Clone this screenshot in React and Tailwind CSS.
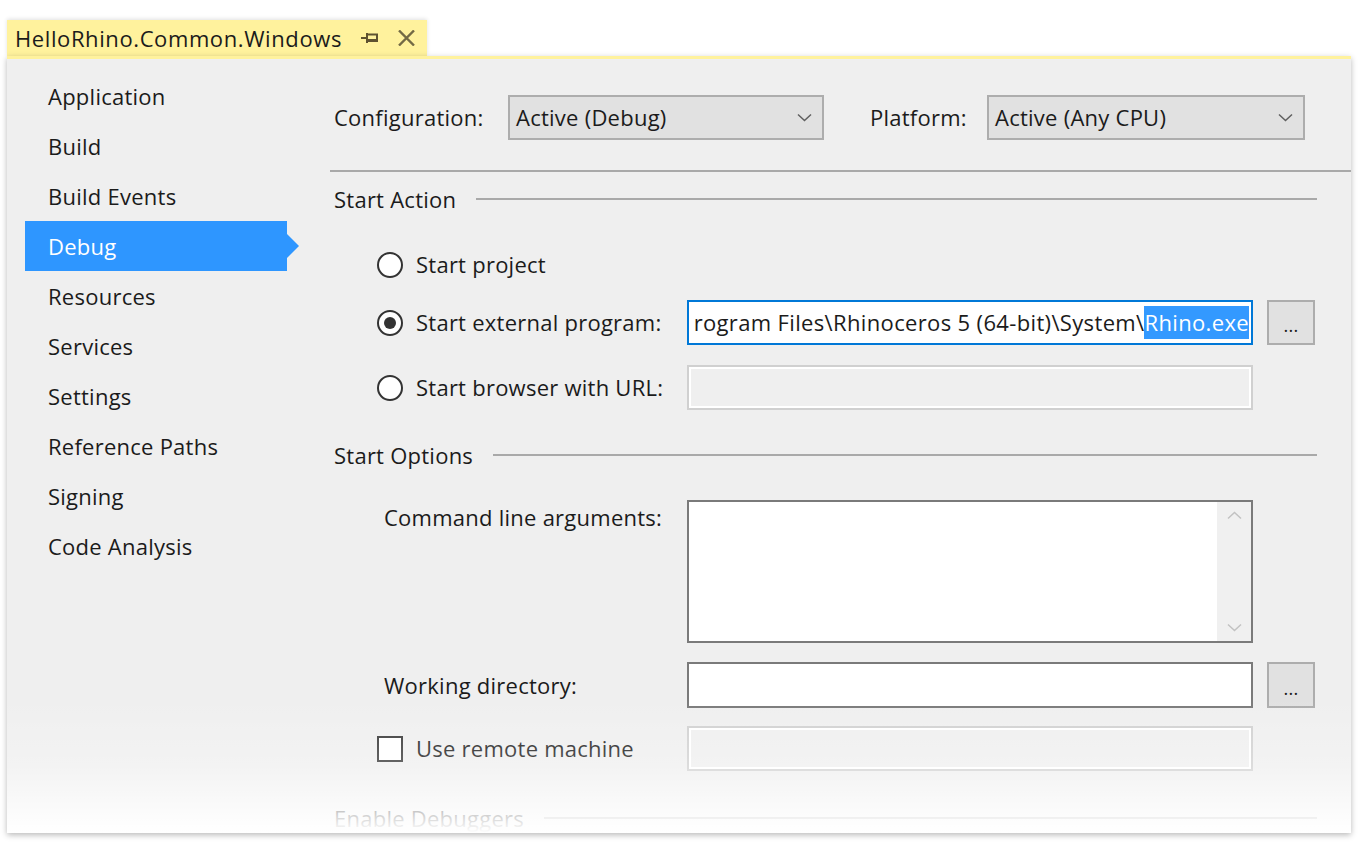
const font = { fontFamily: '"Open Sans", "Noto Sans", sans-serif' }

const navItems = [
  'Application',
  'Build',
  'Build Events',
  'Debug',
  'Resources',
  'Services',
  'Settings',
  'Reference Paths',
  'Signing',
  'Code Analysis',
]

function Chevron({ className = '' }) {
  return (
    <svg className={className} width="15" height="9" viewBox="0 0 15 9" fill="none" stroke="currentColor" strokeWidth="1.5">
      <path d="M1 1.5l6.5 6 6.5-6" />
    </svg>
  )
}

function Dropdown({ value, width }) {
  return (
    <div className={`${width} h-[45px] flex items-center justify-between bg-[#e1e1e1] border-2 border-[#adadad] pl-[6px] pr-[10px]`}>
      <span>{value}</span>
      <Chevron className="text-[#5f5f5f]" />
    </div>
  )
}

function SectionHeader({ title }) {
  return (
    <div className="h-[30px] flex items-center pl-[4px]">
      <span>{title}</span>
      <div className="flex-1 h-[2px] bg-[#a9a9a9] ml-[20px]" />
    </div>
  )
}

function Radio({ checked }) {
  return (
    <div className="w-[26px] h-[26px] rounded-full border-2 border-[#333] bg-white flex items-center justify-center shrink-0">
      {checked && <div className="w-[12px] h-[12px] rounded-full bg-[#333]" />}
    </div>
  )
}

function BrowseButton() {
  return (
    <div className="w-[48px] h-full ml-[14px] bg-[#e1e1e1] border-2 border-[#adadad] flex items-center justify-center pt-[6px] text-[18px]">
      ...
    </div>
  )
}

function DisabledField() {
  return <div className="w-[566px] h-full border-2 border-[#d0d0d0] bg-[#efefef] shadow-[inset_0_0_0_2px_#ffffff]" />
}

export default function App() {
  return (
    <div className="w-[1358px] h-[850px] bg-white overflow-hidden pt-[20px] pl-[7px] text-[22px] tracking-[0.25px] text-[#1b1b1b]" style={font}>
      <div className="w-[420px] h-[36px] bg-[#fff29d] flex items-center pl-[8px] shadow-[0_-1px_4px_rgba(0,0,0,0.12)]">
        <span className="w-[346px] tracking-[0.6px] whitespace-nowrap">HelloRhino.Common.Windows</span>
        <svg className="text-[#5e5230]" width="18" height="10" viewBox="0 0 18 10" fill="none" stroke="currentColor" strokeWidth="2">
          <path d="M0 5h6M6 0v10" />
          <path d="M6 1.5h10v6H6" />
          <path d="M6 7.5h11" strokeWidth="3" />
        </svg>
        <svg className="ml-[19px] text-[#736a45]" width="17" height="16" viewBox="0 0 17 16" fill="none" stroke="currentColor" strokeWidth="2.4">
          <path d="M1 0.5l15 15M16 0.5L1 15.5" />
        </svg>
      </div>
      <div className="relative w-[1344px] h-[777px] border-t-[3px] border-[#fff29d] bg-[#efefef] shadow-[0_2px_6px_rgba(0,0,0,0.28)] flex">
        <nav className="w-[323px] pt-[12px] pl-[18px] shrink-0">
          {navItems.map((item) =>
            item === 'Debug' ? (
              <div key={item} className="relative w-[262px] h-[50px] bg-[#2e96ff] text-white flex items-center pl-[23px]">
                {item}
                <div className="absolute right-[-12px] top-[13px] w-0 h-0 border-y-[12px] border-y-transparent border-l-[12px] border-l-[#2e96ff]" />
              </div>
            ) : (
              <div key={item} className="h-[50px] flex items-center pl-[23px]">
                {item}
              </div>
            )
          )}
        </nav>
        <main className="flex-1 pt-[36px]">
          <div className="flex items-center h-[45px] pl-[4px]">
            <span className="w-[174px]">Configuration:</span>
            <Dropdown value="Active (Debug)" width="w-[316px]" />
            <span className="w-[117px] ml-[46px]">Platform:</span>
            <Dropdown value="Active (Any CPU)" width="w-[318px]" />
          </div>
          <div className="mt-[30px] h-[2px] bg-[#a9a9a9]" />
          <div className="pr-[34px]">
            <div className="mt-[12px]">
              <SectionHeader title="Start Action" />
            </div>
            <div className="mt-[28px] h-[45px] flex items-center pl-[47px]">
              <Radio />
              <span className="ml-[13px]">Start project</span>
            </div>
            <div className="mt-[13px] h-[45px] flex items-center pl-[47px]">
              <Radio checked />
              <span className="ml-[13px] w-[271px]">Start external program:</span>
              <div className="w-[566px] h-full border-2 border-[#0078d7] bg-white flex items-center justify-end overflow-hidden whitespace-nowrap pr-[2px] tracking-[0.35px]">
                <span>rogram Files\Rhinoceros 5 (64-bit)\System\</span>
                <span className="bg-[#3399ff] text-white">Rhino.exe</span>
              </div>
              <BrowseButton />
            </div>
            <div className="mt-[20px] h-[45px] flex items-center pl-[47px]">
              <Radio />
              <span className="ml-[13px] w-[271px]">Start browser with URL:</span>
              <DisabledField />
            </div>
            <div className="mt-[30px]">
              <SectionHeader title="Start Options" />
            </div>
            <div className="mt-[30px] flex pl-[54px]">
              <span className="w-[303px] pt-[1px]">Command line arguments:</span>
              <div className="w-[566px] h-[143px] border-2 border-[#7a7a7a] bg-white flex justify-end">
                <div className="w-[34px] h-full bg-[#f0f0f0] flex flex-col items-center justify-between py-[9px] text-[#c2c2c2]">
                  <Chevron className="rotate-180" />
                  <Chevron />
                </div>
              </div>
            </div>
            <div className="mt-[19px] h-[46px] flex items-center pl-[54px]">
              <span className="w-[303px]">Working directory:</span>
              <div className="w-[566px] h-full border-2 border-[#7a7a7a] bg-white" />
              <BrowseButton />
            </div>
            <div className="mt-[18px] h-[45px] flex items-center pl-[47px]">
              <div className="w-[26px] h-[26px] border-2 border-[#333] bg-white shrink-0" />
              <span className="ml-[13px] w-[271px]">Use remote machine</span>
              <DisabledField />
            </div>
            <div className="mt-[32px]">
              <SectionHeader title="Enable Debuggers" />
            </div>
          </div>
        </main>
        <div className="absolute left-0 right-0 bottom-0 h-[135px] bg-linear-to-b from-white/0 via-white/25 to-white" />
      </div>
    </div>
  )
}
